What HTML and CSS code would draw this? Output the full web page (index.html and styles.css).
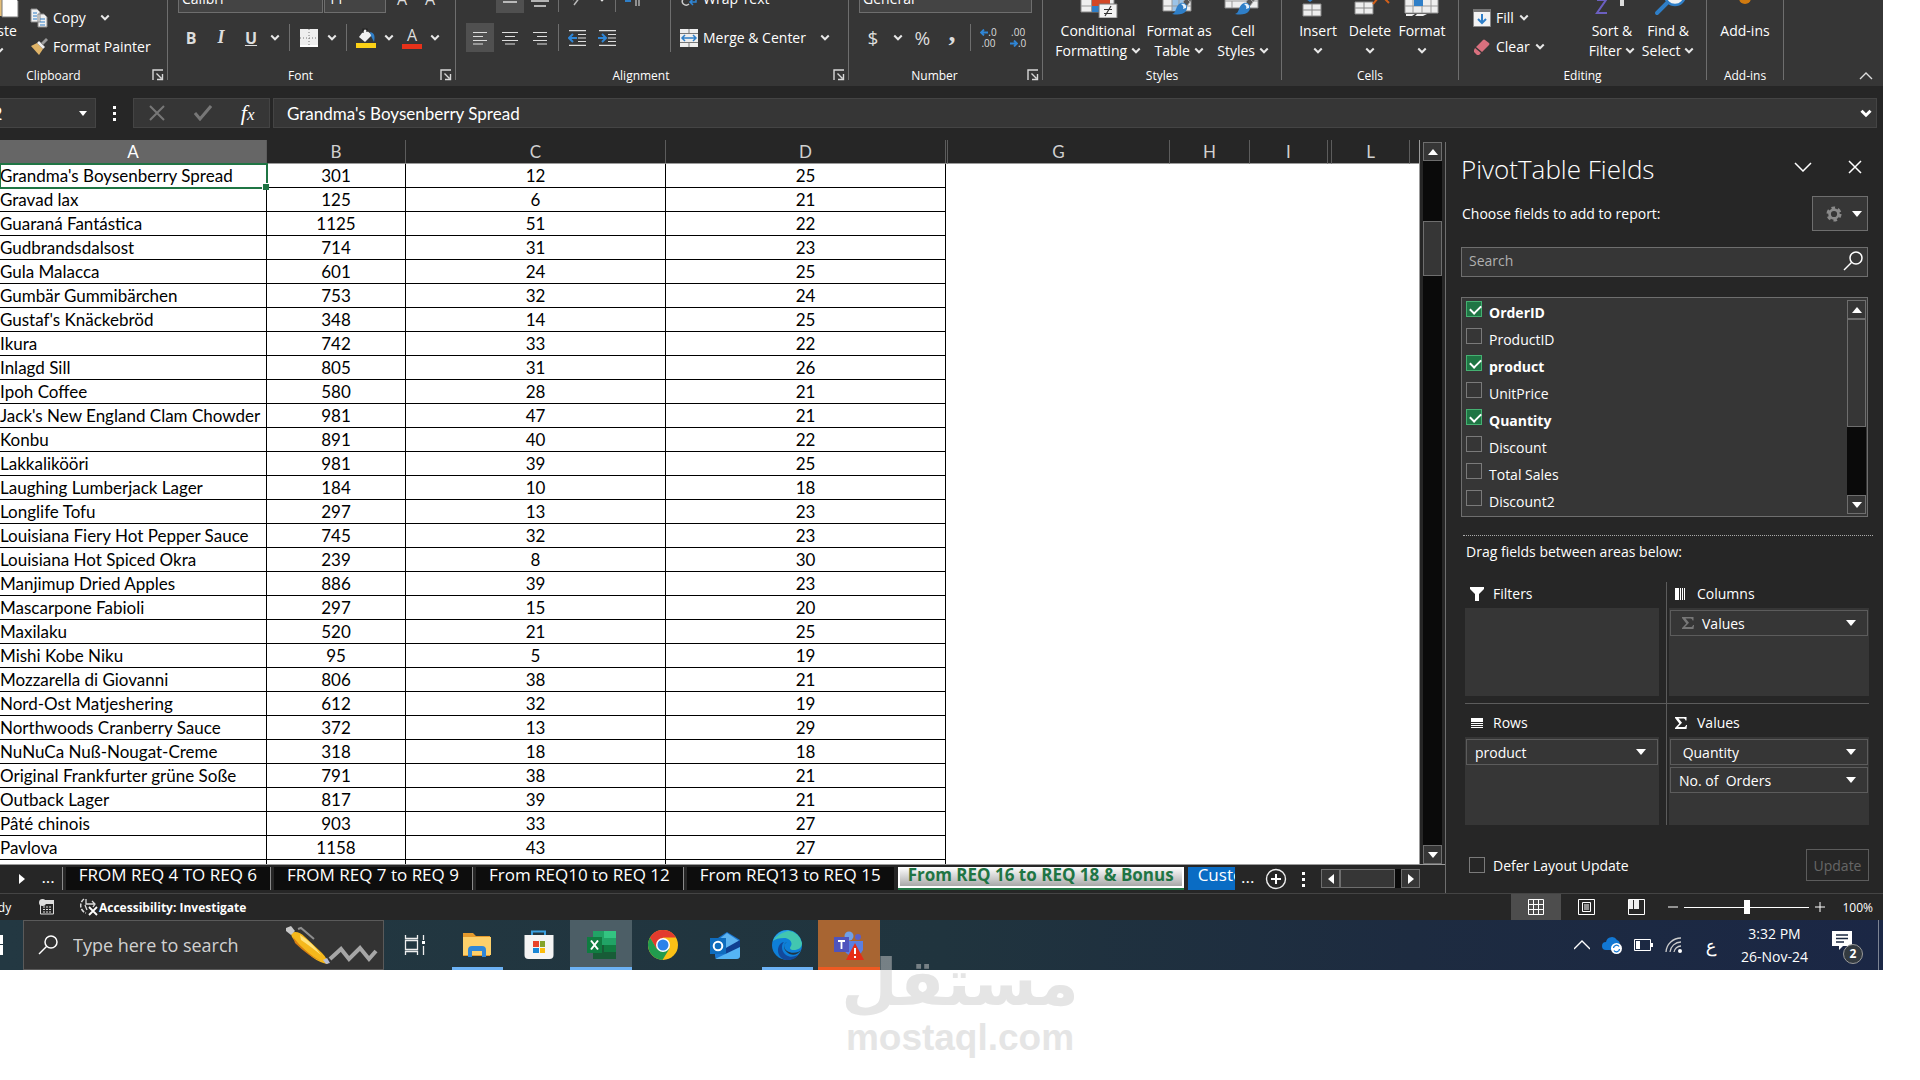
FILE: index.html
```html
<!DOCTYPE html>
<html lang="en">
<head>
    <meta charset="UTF-8">
    <meta name="viewport" content="width=device-width, initial-scale=1.0">
    <title>PivotTable Report</title>
    <link rel="stylesheet" href="styles.css">
</head>
<body>
    <!-- shared icons -->
    <svg class="sprite" aria-hidden="true">
        <symbol id="chev" viewBox="0 0 8 8"><path d="M1 2l3 3 3-3" fill="none" stroke="#e8e8e8" stroke-width="1.6"/></symbol>
        <symbol id="tri" viewBox="0 0 10 6"><path d="M0 0h10L5 6z" fill="#fff"/></symbol>
        <symbol id="launch" viewBox="0 0 12 12"><path d="M1 11V1h10M4.500 4.500l5 5M10.500 5v5.500H5" fill="none" stroke="#d8d8d8" stroke-width="1.400"/></symbol>
        <symbol id="glass" viewBox="0 0 20 20"><circle cx="13" cy="7" r="6" fill="none" stroke="#fff" stroke-width="1.500"/><path d="M8.500 11.500L1 19" stroke="#fff" stroke-width="1.500"/></symbol>
        <symbol id="sigma" viewBox="0 0 12 12"><path d="M0 0h11.500v3.500h-1C10.300 2 9.500 1.500 8 1.500H3.500L7 5.800 3 10h5.500c1.500 0 2.200-.6 2.500-2h1L11.500 12H0v-1l4.300-4.600L0 1z" fill="currentColor"/></symbol>
        <symbol id="brush" viewBox="0 0 28 22"><path d="M27-4l-9 10-4-3 10-9z" fill="#6e6e6e"/><path d="M18 6l-4-4-3 4 4 4z" fill="#555" stroke="#aaa" stroke-width=".8"/><path d="M0 18c5-1 3-9 9-11 5-1 8 4 5 8-3 4-9 4-14 3z" fill="#2f7fc8"/><path d="M9 8c3-1 6 1 5 4l-3 1c1-2 0-4-2-5z" fill="#e8f1fa"/></symbol>
    </svg>

    <div class="app">
        <div class="ribbon">
            <div class="group clipboard">
                <div class="body">
                    <button class="big paste">
                        <svg width="40" height="40" viewBox="0 0 40 40"><path d="M0 0h24v38H0z" fill="#e4bd76"/><path d="M23 17h10l6 6v16H23z" fill="#fff" stroke="#777"/></svg>
                        <span>Paste</span><span><svg class="chev"><use href="#chev"/></svg></span>
                    </button>
                    <div class="stack">
                        <button class="item">
                            <svg width="18" height="20" viewBox="0 0 18 20"><path d="M1 1h6l3 3v10H1zM8 6h6l3 3v10H8z" fill="#f0f0f0" stroke="#888"/><path d="M3 5h4M3 8h4M3 11h4M10 11h5M10 14h5M10 17h5" stroke="#2f7fc8"/></svg>
                            Copy <svg class="chev far"><use href="#chev"/></svg>
                        </button>
                        <button class="item">
                            <svg width="18" height="18" viewBox="0 0 18 18"><path d="M1 8l6-3 6 6-4 6z" fill="#e0b468"/><path d="M7 5l2-2 6 6-2 2z" fill="#eee"/><path d="M11 5l5-5 2 2-5 5z" fill="#9a9a9a"/></svg>
                            Format Painter
                        </button>
                    </div>
                </div>
                <div class="foot"><span>Clipboard</span><svg class="launch"><use href="#launch"/></svg></div>
            </div>

            <div class="group font">
                <div class="body rows">
                    <div class="row">
                        <select class="combo name" aria-label="Font"><option>Calibri</option></select>
                        <select class="combo size" aria-label="Font size"><option>11</option></select>
                        <button class="tool grow">A</button><button class="tool shrink">A</button>
                    </div>
                    <div class="row">
                        <button class="tool wide"><b>B</b></button>
                        <button class="tool wide"><i class="serif">I</i></button>
                        <button class="tool wide"><b><u>U</u></b></button>
                        <button class="drop"><svg class="chev"><use href="#chev"/></svg></button>
                        <span class="sep"></span>
                        <button class="tool"><svg width="18" height="18" viewBox="0 0 18 18"><path d="M0 0h18v18H0z" fill="#eee"/><path d="M0 9h18M9 0v18" stroke="#777" stroke-dasharray="1 2"/><path d="M0 17h18" stroke="#fff" stroke-width="2"/></svg></button>
                        <button class="drop"><svg class="chev"><use href="#chev"/></svg></button>
                        <span class="sep"></span>
                        <button class="tool"><svg width="20" height="20" viewBox="0 0 20 20"><path d="M9 1l7 6-7 7-6-5z" fill="#f2f2f2"/><path d="M7 5V1h4v3" fill="none" stroke="#222" stroke-width="1.200"/><path d="M14 4c5 1 5 5 4 10l-3-6z" fill="#2f7fc8"/><path d="M0 15h20v5H0z" fill="#fcd116"/></svg></button>
                        <button class="drop"><svg class="chev"><use href="#chev"/></svg></button>
                        <button class="tool color"><span>A</span></button>
                        <button class="drop"><svg class="chev"><use href="#chev"/></svg></button>
                    </div>
                </div>
                <div class="foot"><span>Font</span><svg class="launch"><use href="#launch"/></svg></div>
            </div>

            <div class="group align">
                <div class="body">
                    <div class="rows split">
                        <div class="row gap">
                            <button class="tool"></button>
                            <button class="tool on"><svg width="18" height="16" viewBox="0 0 18 16"><path d="M1 3h16M4 7h10M2 11h14" stroke="#ddd" stroke-width="1.300"/></svg></button>
                            <button class="tool"><svg width="18" height="16" viewBox="0 0 18 16"><path d="M4 5h10M0 10h18M3 15h12" stroke="#ddd" stroke-width="1.300"/></svg></button>
                            <span class="sep"></span>
                            <button class="tool"><svg width="14" height="16" viewBox="0 0 14 16"><path d="M3 9l5-5M4 14L13 2" stroke="#bbb" stroke-width="1.500"/></svg></button>
                            <button class="drop"><svg class="chev"><use href="#chev"/></svg></button>
                            <span class="sep"></span>
                            <button class="tool"><svg width="18" height="16" viewBox="0 0 18 16"><path d="M0 10h6" stroke="#2f7fc8" stroke-width="2"/><path d="M11 2v13M14 2v13" stroke="#ccc" stroke-width="1.200"/></svg></button>
                        </div>
                        <div class="row gap">
                            <button class="tool on"><svg width="16" height="14" viewBox="0 0 16 14"><path d="M1 1.500h14M1 5.500h10M1 9.500h14M1 13h10" stroke="#ddd" stroke-width="1.200"/></svg></button>
                            <button class="tool"><svg width="16" height="14" viewBox="0 0 16 14"><path d="M0 1.500h16M3 5.500h10M0 9.500h16M3 13h10" stroke="#ddd" stroke-width="1.200"/></svg></button>
                            <button class="tool"><svg width="16" height="14" viewBox="0 0 16 14"><path d="M1 1.500h14M5 5.500h10M1 9.500h14M5 13h10" stroke="#ddd" stroke-width="1.200"/></svg></button>
                            <span class="sep"></span>
                            <button class="tool"><svg width="18" height="16" viewBox="0 0 18 16"><path d="M1 .7h17M10 4.500h8M10 8h8M10 11.500h8M1 15.300h17" stroke="#ddd" stroke-width="1.200"/><path d="M9 8H2M5 4L1 8l4 4" fill="none" stroke="#2f86d6" stroke-width="2"/></svg></button>
                            <button class="tool"><svg width="18" height="16" viewBox="0 0 18 16"><path d="M1 .7h17M10 4.500h8M10 8h8M10 11.500h8M1 15.300h17" stroke="#ddd" stroke-width="1.200"/><path d="M0 8h7M4 4l4 4-4 4" fill="none" stroke="#2f86d6" stroke-width="2"/></svg></button>
                        </div>
                    </div>
                    <div class="rows">
                        <button class="item short"><svg width="18" height="18" viewBox="0 0 18 18"><path d="M9 9a4 3.500 0 1 0 0 5" fill="none" stroke="#ccc" stroke-width="1.500"/><path d="M16 6v6h-5M13 9l-3 3 3 3" fill="none" stroke="#2f86d6" stroke-width="1.500"/></svg>Wrap Text</button>
                        <button class="item short"><svg width="18" height="18" viewBox="0 0 18 18"><path d="M0 0h18v18H0z" fill="#eee"/><path d="M0 4.500h18M0 13.500h18M9 0v4M9 14v4" stroke="#777"/><path d="M2 9h14M5 6L2 9l3 3M13 6l3 3-3 3" fill="none" stroke="#2f7fc8" stroke-width="1.500"/></svg>Merge &amp; Center <svg class="chev far"><use href="#chev"/></svg></button>
                    </div>
                </div>
                <div class="foot"><span>Alignment</span><svg class="launch"><use href="#launch"/></svg></div>
            </div>

            <div class="group number">
                <div class="body rows">
                    <div class="row"><select class="combo format" aria-label="Number format"><option>General</option></select></div>
                    <div class="row gap">
                        <button class="tool sign">$</button>
                        <button class="drop"><svg class="chev"><use href="#chev"/></svg></button>
                        <button class="tool sign">%</button>
                        <button class="tool sign comma">,</button>
                        <span class="sep"></span>
                        <button class="tool dec"><span><svg width="8" height="7" viewBox="0 0 8 7"><path d="M8 3.500H2M4 .5l-3 3 3 3" fill="none" stroke="#2f86d6" stroke-width="1.800"/></svg>.0</span><span>.00</span></button>
                        <button class="tool dec"><span>.00</span><span><svg width="8" height="7" viewBox="0 0 8 7"><path d="M0 3.500h6M4 .5l3 3-3 3" fill="none" stroke="#2f86d6" stroke-width="1.800"/></svg>.0</span></button>
                    </div>
                </div>
                <div class="foot"><span>Number</span><svg class="launch"><use href="#launch"/></svg></div>
            </div>

            <div class="group">
                <div class="body bigs">
                    <button class="big w90">
                        <svg width="40" height="40" viewBox="0 0 40 40"><path d="M3 0h33v34H3z" fill="#eee" stroke="#888"/><path d="M14 22h18v6H14z" fill="#d24726"/><path d="M14 28h7v6h-7z" fill="#2f7fc8"/><path d="M3 28h11M13.500 20v14" stroke="#999"/><path d="M21 26h18v14H21z" fill="#f3f3f3" stroke="#777"/><path d="M26 31.500h8M26 35.500h8M33 28l-6 10" stroke="#333" stroke-width="1.200"/></svg>
                        <span>Conditional</span><span>Formatting <svg class="chev"><use href="#chev"/></svg></span>
                    </button>
                    <button class="big w72">
                        <svg width="40" height="40" viewBox="0 0 40 40"><path d="M4 0h28v33H4z" fill="#eee" stroke="#888"/><path d="M13 22h14v11H13z" fill="#9cc3e6"/><path d="M4 28h28M13 20v13M20 20v13" stroke="#999"/><use href="#brush" x="13" y="18" width="28" height="22"/></svg>
                        <span>Format as</span><span>Table <svg class="chev"><use href="#chev"/></svg></span>
                    </button>
                    <button class="big w56">
                        <svg width="40" height="40" viewBox="0 0 40 40"><path d="M2 0h33v30H2z" fill="#eee" stroke="#888"/><path d="M2 23h33M9 23v7" stroke="#999"/><use href="#brush" x="12" y="18" width="28" height="22"/></svg>
                        <span>Cell</span><span>Styles <svg class="chev"><use href="#chev"/></svg></span>
                    </button>
                </div>
                <div class="foot"><span>Styles</span></div>
            </div>

            <div class="group">
                <div class="body bigs">
                    <button class="big w52">
                        <svg width="40" height="40" viewBox="0 0 40 40"><path d="M8 21l4 3 4-3z" fill="#2f7fc8"/><path d="M5 26h18v12H5zM5 32h18M14 26v12" fill="#eee" stroke="#888"/></svg>
                        <span>Insert</span><span><svg class="chev"><use href="#chev"/></svg></span>
                    </button>
                    <button class="big w52">
                        <svg width="40" height="40" viewBox="0 0 40 40"><path d="M5 24h18v12H5zM5 30h18M14 24v12" fill="#eee" stroke="#888"/><path d="M23 26l5-6M34 20l5 5" stroke="#d2601a" stroke-width="2"/></svg>
                        <span>Delete</span><span><svg class="chev"><use href="#chev"/></svg></span>
                    </button>
                    <button class="big w52">
                        <svg width="40" height="40" viewBox="0 0 40 40"><path d="M3 8h33v27H3zM3 28h33M11 8v27M20 8v27M29 8v27" fill="#eee" stroke="#999"/><path d="M12 18h9v10h-9z" fill="#2f7fc8"/><path d="M4 36h9l-3 2H4zM15 36h10l-4 2h-8z" fill="#eee"/></svg>
                        <span>Format</span><span><svg class="chev"><use href="#chev"/></svg></span>
                    </button>
                </div>
                <div class="foot"><span>Cells</span></div>
            </div>

            <div class="group">
                <div class="body bigs">
                    <div class="stack edit">
                        <button class="item"><svg width="18" height="18" viewBox="0 0 18 18"><path d="M.5.5h17v17H.5z" fill="#f3f3f3" stroke="#888"/><path d="M0 0h18v3H0z" fill="#777"/><path d="M9 5v9M5 10l4 4 4-4" fill="none" stroke="#2f7fc8" stroke-width="2"/></svg>Fill <svg class="chev"><use href="#chev"/></svg></button>
                        <button class="item"><svg width="18" height="18" viewBox="0 0 18 18"><path d="M10 2q1-1 2 0l4 3q1 1 0 2l-7 7-6-5z" fill="#d9707e"/><path d="M2 10l6 5-2 2H4l-3-3v-2z" fill="#d9707e"/></svg>Clear <svg class="chev"><use href="#chev"/></svg></button>
                    </div>
                    <button class="big w56">
                        <svg width="40" height="40" viewBox="0 0 40 40"><path d="M5 22h9L5 35h10" fill="none" stroke="#6b5fc0" stroke-width="2"/><path d="M28 20h4v8h-4z" fill="#ddd"/></svg>
                        <span>Sort &amp;</span><span>Filter <svg class="chev"><use href="#chev"/></svg></span>
                    </button>
                    <button class="big w56">
                        <svg width="40" height="40" viewBox="0 0 40 40"><circle cx="27" cy="17" r="10" fill="#f3f3f3" stroke="#2f7fc8" stroke-width="2.500"/><path d="M19 25L9 35" stroke="#2f7fc8" stroke-width="4" stroke-linecap="round"/></svg>
                        <span>Find &amp;</span><span>Select <svg class="chev"><use href="#chev"/></svg></span>
                    </button>
                </div>
                <div class="foot"><span>Editing</span></div>
            </div>

            <div class="group">
                <div class="body bigs">
                    <button class="big w56">
                        <svg width="40" height="40" viewBox="0 0 40 40"><circle cx="20" cy="20" r="6" fill="#d07a10"/></svg>
                        <span>Add-ins</span><span></span>
                    </button>
                </div>
                <div class="foot"><span>Add-ins</span></div>
            </div>
            <button class="collapse" aria-label="Collapse ribbon"><svg width="14" height="8" viewBox="0 0 14 8"><path d="M1 7l6-6 6 6" fill="none" stroke="#ddd" stroke-width="1.400"/></svg></button>
        </div>

        <div class="formula-bar">
            <div class="name-box"><input type="text" value="A2" aria-label="Name box"><svg width="8" height="5"><use href="#tri"/></svg></div>
            <span class="dots"><i></i><i></i><i></i></span>
            <div class="fx">
                <button aria-label="Cancel"><svg width="16" height="16" viewBox="0 0 16 16"><path d="M1 1l14 14M15 1L1 15" stroke="#777" stroke-width="2"/></svg></button>
                <button aria-label="Enter"><svg width="18" height="16" viewBox="0 0 18 16"><path d="M1 8l5 6L17 1" fill="none" stroke="#777" stroke-width="3"/></svg></button>
                <button aria-label="Insert function"><i>f<small>x</small></i></button>
            </div>
            <div class="formula"><input type="text" value="Grandma's Boysenberry Spread" aria-label="Formula"><svg width="12" height="12" viewBox="0 0 8 8"><path d="M1 2.500l3 3 3-3" fill="none" stroke="#fff" stroke-width="2"/></svg></div>
        </div>

        <div class="work">
            <div class="book">
                <div class="sheet">
                    <div class="grid">
                        <table>
                            <colgroup><col class="ca"><col class="cb"><col class="cc"><col class="cd"><col class="hid"><col class="cg"><col class="ch"><col class="ci"><col class="hid2"><col class="ci"><col></colgroup>
                            <thead><tr><th class="sel">A</th><th>B</th><th>C</th><th>D</th><th></th><th>G</th><th>H</th><th>I</th><th></th><th>L</th><th></th></tr></thead>
                            <tbody id="rows"></tbody>
                        </table>
                    </div>
                    <div class="vbar">
                        <button class="sb" aria-label="Up"><svg class="up" width="10" height="6"><use href="#tri"/></svg></button>
                        <div class="track"><div class="thumb"></div></div>
                        <button class="sb" aria-label="Down"><svg width="10" height="6"><use href="#tri"/></svg></button>
                    </div>
                </div>
                <div class="tabs">
                    <button class="nav" aria-label="Next sheet"><svg width="6" height="10" viewBox="0 0 6 10"><path d="M0 0l6 5-6 5z" fill="#fff"/></svg></button>
                    <span class="more">...</span>
                    <button class="tab">FROM REQ 4 TO REQ 6</button>
                    <button class="tab">FROM REQ 7 to REQ 9</button>
                    <button class="tab">From REQ10 to REQ 12</button>
                    <button class="tab">From REQ13 to REQ 15</button>
                    <button class="tab active">From REQ 16 to REQ 18 &amp; Bonus</button>
                    <button class="tab blue">Custo</button>
                    <span class="more">...</span>
                    <button class="add" aria-label="New sheet"><svg width="22" height="22" viewBox="0 0 22 22"><circle cx="11" cy="11" r="9.500" fill="none" stroke="#eee" stroke-width="1.400"/><path d="M11 6v10M6 11h10" stroke="#fff" stroke-width="2"/></svg></button>
                    <span class="dots"><i></i><i></i><i></i></span>
                    <div class="hbar">
                        <button class="sb" aria-label="Left"><svg width="6" height="10" viewBox="0 0 6 10"><path d="M6 0L0 5l6 5z" fill="#fff"/></svg></button>
                        <div class="thumb"></div>
                        <button class="sb" aria-label="Right"><svg width="6" height="10" viewBox="0 0 6 10"><path d="M0 0l6 5-6 5z" fill="#fff"/></svg></button>
                    </div>
                </div>
            </div>

            <div class="panel">
                <div class="title">
                    <h2>PivotTable Fields</h2>
                    <button aria-label="Options"><svg width="18" height="10" viewBox="0 0 18 10"><path d="M1 1l8 8 8-8" fill="none" stroke="#fff" stroke-width="1.500"/></svg></button>
                    <button aria-label="Close"><svg width="14" height="14" viewBox="0 0 14 14"><path d="M1 1l12 12M13 1L1 13" stroke="#fff" stroke-width="1.500"/></svg></button>
                </div>
                <div class="choose">
                    <span>Choose fields to add to report:</span>
                    <button class="gear" aria-label="Tools"><svg width="16" height="16" viewBox="0 0 18 18"><circle cx="9" cy="9" r="5" fill="none" stroke="#8a8a8a" stroke-width="3"/><circle cx="9" cy="9" r="7" fill="none" stroke="#8a8a8a" stroke-width="3" stroke-dasharray="4 3.330"/></svg><svg width="10" height="6"><use href="#tri"/></svg></button>
                </div>
                <div class="search"><input type="text" placeholder="Search" aria-label="Search fields"><svg width="20" height="20"><use href="#glass"/></svg></div>
                <div class="fields">
                    <div class="list">
                        <label><input type="checkbox" checked><b>OrderID</b></label>
                        <label><input type="checkbox"><span>ProductID</span></label>
                        <label><input type="checkbox" checked><b>product</b></label>
                        <label><input type="checkbox"><span>UnitPrice</span></label>
                        <label><input type="checkbox" checked><b>Quantity</b></label>
                        <label><input type="checkbox"><span>Discount</span></label>
                        <label><input type="checkbox"><span>Total Sales</span></label>
                        <label><input type="checkbox"><span>Discount2</span></label>
                    </div>
                    <div class="vbar">
                        <button class="sb" aria-label="Up"><svg class="up" width="10" height="6"><use href="#tri"/></svg></button>
                        <div class="track"><div class="thumb"></div></div>
                        <button class="sb" aria-label="Down"><svg width="10" height="6"><use href="#tri"/></svg></button>
                    </div>
                </div>
                <div class="drag">Drag fields between areas below:</div>
                <div class="areas">
                    <div class="area left top">
                        <h3><svg width="14" height="14" viewBox="0 0 14 14"><path d="M0 0h14v2L9 7v7H5V7L0 2z" fill="#fff"/></svg>Filters</h3>
                        <div class="drop-zone"></div>
                    </div>
                    <div class="area top">
                        <h3><svg width="14" height="14" viewBox="0 0 14 14"><path d="M1 1h4v12H1zM6 1h1v12H6zM8 1h1v12H8zM10 1h1v12h-1z" fill="#fff"/></svg>Columns</h3>
                        <div class="drop-zone"><button class="field"><svg class="dim" width="12" height="12"><use href="#sigma"/></svg><span>Values</span><svg width="10" height="6"><use href="#tri"/></svg></button></div>
                    </div>
                    <div class="area left">
                        <h3><svg width="14" height="14" viewBox="0 0 14 14"><path d="M1 2h12v4H1zM1 7h12v1H1zM1 9h12v1H1zM1 11h12v1H1z" fill="#fff"/></svg>Rows</h3>
                        <div class="drop-zone"><button class="field"><span>product</span><svg width="10" height="6"><use href="#tri"/></svg></button></div>
                    </div>
                    <div class="area">
                        <h3><svg width="14" height="12"><use href="#sigma"/></svg>Values</h3>
                        <div class="drop-zone">
                            <button class="field"><span>&nbsp;Quantity</span><svg width="10" height="6"><use href="#tri"/></svg></button>
                            <button class="field"><span>No. of&nbsp; Orders</span><svg width="10" height="6"><use href="#tri"/></svg></button>
                        </div>
                    </div>
                </div>
                <div class="defer">
                    <label><input type="checkbox"><span>Defer Layout Update</span></label>
                    <button disabled>Update</button>
                </div>
            </div>
        </div>

        <div class="status">
            <span class="ready">Ready</span>
            <svg width="16" height="16" viewBox="0 0 16 16"><path d="M1.500 3v12h13V1.500H6" fill="none" stroke="#ddd"/><path d="M6 1h9v4H6z" fill="#ddd"/><circle cx="3.500" cy="3.500" r="3.500" fill="#ddd"/><path d="M4 8h2M7 8h2M10 8h2M4 10.500h2M7 10.500h2M10 10.500h2M4 13h2M7 13h2M10 13h2" stroke="#ddd"/></svg>
            <button class="access"><svg width="20" height="18" viewBox="0 0 20 18"><path d="M6 1a8 8 0 0 0 2 14" fill="none" stroke="#ddd" stroke-width="1.500" stroke-dasharray="4 1.500"/><path d="M8 1v5h8M14 3l3 3-2 3M7 7l2 5" fill="none" stroke="#ddd" stroke-width="1.300"/><path d="M11 9l8 8M19 9l-8 8" stroke="#fff" stroke-width="1.800"/></svg>Accessibility: Investigate</button>
            <div class="views">
                <button class="on" aria-label="Normal"><svg width="16" height="16" viewBox="0 0 16 16"><path d="M.5.5h15v15H.5zM.5 5.500h15M.5 10.500h15M5.500.5v15M10.500.5v15" fill="none" stroke="#fff"/></svg></button>
                <button aria-label="Page layout"><svg width="17" height="16" viewBox="0 0 17 16"><path d="M.5.5h16v15H.5zM4.500 3.500h8v9h-8zM6 6h5M6 8h5M6 10h5" fill="none" stroke="#fff"/></svg></button>
                <button aria-label="Page break"><svg width="17" height="16" viewBox="0 0 17 16"><path d="M.5.5h16v15H.5z" fill="none" stroke="#fff"/><path d="M1 1h4v9H1zM6 1h5v9H6z" fill="#eee"/></svg></button>
            </div>
            <button class="zoom" aria-label="Zoom out"><svg width="10" height="10" viewBox="0 0 10 10"><path d="M0 5h10" stroke="#fff"/></svg></button>
            <input type="range" min="0" max="100" value="50" aria-label="Zoom">
            <button class="zoom" aria-label="Zoom in"><svg width="10" height="10" viewBox="0 0 10 10"><path d="M0 5h10M5 0v10" stroke="#fff"/></svg></button>
            <span class="percent">100%</span>
        </div>

        <div class="taskbar">
            <button class="start" aria-label="Start"><svg width="20" height="20" viewBox="0 0 20 20"><path d="M0 0h9v9H0zM10 0h10v9H10zM0 10h9v10H0zM10 10h10v10H10z" fill="#fff"/></svg></button>
            <div class="find">
                <svg width="20" height="20"><use href="#glass"/></svg>
                <input type="text" placeholder="Type here to search" aria-label="Type here to search">
                <svg width="92" height="40" viewBox="0 0 92 40">
                    <path d="M44 34l11-10 8 10 11-11 9 11 7-8" fill="none" stroke="#a6a6a6" stroke-width="4"/>
                    <path d="M5 8Q12 5 19 12L36 28Q41 33 42 39 34 38 26 32L9 16Q5 12 5 8z" fill="#f5b81c"/>
                    <path d="M7 12q12 16 28 24-12-4-26-18z" fill="#d97f13"/>
                    <path d="M14 10q12 7 21 20-11-9-20-15z" fill="#ffe27a"/>
                    <path d="M0 3l5-2 4 5-4 4-5-4z" fill="#c8c8c8"/>
                    <path d="M12 4l3-1 13 11" fill="none" stroke="#8e8e8e" stroke-width="2"/>
                    <path d="M37 35l4-2 3 5-4 1z" fill="#b8bfd6"/>
                </svg>
            </div>
            <div class="apps">
                <button aria-label="Task view"><svg width="22" height="20" viewBox="0 0 22 20"><path d="M1.500 0v3.500h12V0M1.500 20v-3.500h12V20M1.500 5.500h12v9h-12zM19.500 0v5M19.500 11v9" fill="none" stroke="#eee" stroke-width="1.300"/><path d="M18 6h3v3h-3z" fill="#fff"/></svg></button>
                <button class="open" aria-label="File Explorer"><svg width="30" height="30" viewBox="0 0 30 30"><path d="M1 3h10l3 3h14v20H1z" fill="#e59a2c"/><path d="M1 7h28v18H1z" fill="#fdd06a"/><path d="M6 27v-7q0-4 4-4h10q4 0 4 4v7h-4v-6H10v6z" fill="#2f86d6"/></svg></button>
                <button aria-label="Store"><svg width="30" height="30" viewBox="0 0 30 30"><path d="M8 5V1.500h13V5" fill="none" stroke="#3aa0e0" stroke-width="2"/><path d="M.5 5h29v20q0 4-4 4h-21q-4 0-4-4z" fill="#f4f4f4"/><path d="M9 11h6v6H9z" fill="#e8432a"/><path d="M16 11h5v6h-5z" fill="#84a32a"/><path d="M9 18h6v5H9z" fill="#1a87d6"/><path d="M16 18h5v5h-5z" fill="#fbbc0c"/></svg></button>
                <button class="open full excel" aria-label="Excel"><svg width="30" height="30" viewBox="0 0 30 30"><path d="M7 1h23v28H7z" fill="#21a366"/><path d="M18 1h12v7H18z" fill="#33c481"/><path d="M7 15h23v14H7z" fill="#185c37"/><path d="M18 15h12v7H18z" fill="#107c41"/><path d="M1 7h15v16H1z" fill="#107c41"/><path d="M5 10.500l7 9M12 10.500l-7 9" stroke="#fff" stroke-width="2"/></svg></button>
                <button aria-label="Chrome"><svg width="30" height="30" viewBox="0 0 30 30"><circle cx="15" cy="15" r="15" fill="#fbc116"/><path d="M2 7.500A15 15 0 0 1 28 7.500H15L8.500 19z" fill="#e33b2e"/><path d="M2 7.500A15 15 0 0 0 14.500 30L21.500 18.500H8.500z" fill="#229b4e"/><circle cx="15" cy="15" r="7" fill="#fff"/><circle cx="15" cy="15" r="5.500" fill="#2a82ea"/></svg></button>
                <button aria-label="Outlook"><svg width="30" height="30" viewBox="0 0 30 30"><path d="M17 2l13 8v15q0 4-4 4H8q-3 0-3-3V10z" fill="#1b76d1"/><path d="M8 10l9-7 12 8-12 8z" fill="#5db3f0"/><path d="M14 19l16-9v8l-14 8z" fill="#0f3f91"/><path d="M5 29l25-12v9q0 3-4 3z" fill="#55b4f4"/><path d="M0 8h16v16H0z" fill="#0f6cbd"/><circle cx="8" cy="16" r="4.300" fill="none" stroke="#fff" stroke-width="2"/></svg></button>
                <button class="open" aria-label="Edge"><svg width="30" height="30" viewBox="0 0 30 30"><circle cx="15" cy="15" r="15" fill="#0e7fd8"/><path d="M1 11A15 15 0 0 1 30 13c0 5-4 7-8 7s-5-2-3-4c2-4-2-8-7-8S3 9 1 11z" fill="#42c6b0"/><path d="M1 11A15 15 0 0 1 18 .4C10 2 4 6 1 11z" fill="#2aa4e6"/><path d="M12 12c-3 3-3 9 2 13 4 3 9 2 13-1-5 8-16 8-20 1-3-6 1-13 5-13z" fill="#124a9c"/><path d="M15 12c-4 1-4 8 2 10s10 0 12-2c-3 5-9 6-13 3s-6-8-1-11z" fill="#22343f"/></svg></button>
                <button class="open full teams" aria-label="Teams"><svg width="32" height="30" viewBox="0 0 32 30"><circle cx="16" cy="6" r="4.500" fill="#6fa0e8"/><circle cx="25" cy="7" r="3" fill="#5b5fc7"/><path d="M8 11h22v9q-3 6-9 6-7 0-10-6z" fill="#5b7fe0"/><path d="M1 7h15v15H1z" fill="#4f54bd"/><path d="M5 11h7M8.500 11v8" stroke="#fff" stroke-width="1.800"/><path d="M22 13l9 17H13z" fill="#e62d17"/><path d="M22 18v6M22 26v2" stroke="#fff" stroke-width="2"/></svg></button>
            </div>
            <div class="tray">
                <svg width="16" height="10" viewBox="0 0 16 10"><path d="M0 9l8-8 8 8" fill="none" stroke="#fff" stroke-width="1.300"/></svg>
                <svg width="20" height="18" viewBox="0 0 20 18"><path d="M4 14a4 4 0 0 1 0-8 6 6 0 0 1 11-2q3 1 3 5v5z" fill="#1278d4"/><circle cx="14.500" cy="12.500" r="5.500" fill="#fff"/><path d="M11.500 12a3 3 0 0 1 5.500-1.500M17.500 13a3 3 0 0 1-5.500 1.500" fill="none" stroke="#1278d4" stroke-width="1.300"/></svg>
                <svg width="19" height="12" viewBox="0 0 19 12"><path d="M.5.5h16v11H.5z" fill="none" stroke="#fff"/><path d="M2 2h4v8H2zM17 4h2v4h-2z" fill="#fff"/></svg>
                <svg width="18" height="18" viewBox="0 0 18 18"><path d="M1 16A15 15 0 0 1 16 2M5 16A11 11 0 0 1 16 6M9 16a7 7 0 0 1 7-6" fill="none" stroke="#ccc" stroke-width="1.300"/><circle cx="15" cy="15" r="2" fill="#fff"/></svg>
                <span class="lang">ع</span>
                <div class="clock"><span>3:32 PM</span><span>26-Nov-24</span></div>
                <button class="note" aria-label="Notifications"><svg width="32" height="32" viewBox="0 0 32 32"><path d="M1 2h20v15h-9l-4 4v-4H1z" fill="#fff"/><path d="M5 6h12M5 9.500h12M5 13h8" stroke="#1c2a42" stroke-width="1.300"/></svg><em>2</em></button>
            </div>
        </div>
    </div>

    <div class="watermark"><span lang="ar">مستقل</span><span class="site">mostaql.com</span></div>

    <script>
        var data = [
            ["Grandma's Boysenberry Spread", 301, 12, 25],
            ["Gravad lax", 125, 6, 21],
            ["Guaraná Fantástica", 1125, 51, 22],
            ["Gudbrandsdalsost", 714, 31, 23],
            ["Gula Malacca", 601, 24, 25],
            ["Gumbär Gummibärchen", 753, 32, 24],
            ["Gustaf's Knäckebröd", 348, 14, 25],
            ["Ikura", 742, 33, 22],
            ["Inlagd Sill", 805, 31, 26],
            ["Ipoh Coffee", 580, 28, 21],
            ["Jack's New England Clam Chowder", 981, 47, 21],
            ["Konbu", 891, 40, 22],
            ["Lakkalikööri", 981, 39, 25],
            ["Laughing Lumberjack Lager", 184, 10, 18],
            ["Longlife Tofu", 297, 13, 23],
            ["Louisiana Fiery Hot Pepper Sauce", 745, 32, 23],
            ["Louisiana Hot Spiced Okra", 239, 8, 30],
            ["Manjimup Dried Apples", 886, 39, 23],
            ["Mascarpone Fabioli", 297, 15, 20],
            ["Maxilaku", 520, 21, 25],
            ["Mishi Kobe Niku", 95, 5, 19],
            ["Mozzarella di Giovanni", 806, 38, 21],
            ["Nord-Ost Matjeshering", 612, 32, 19],
            ["Northwoods Cranberry Sauce", 372, 13, 29],
            ["NuNuCa Nuß-Nougat-Creme", 318, 18, 18],
            ["Original Frankfurter grüne Soße", 791, 38, 21],
            ["Outback Lager", 817, 39, 21],
            ["Pâté chinois", 903, 33, 27],
            ["Pavlova", 1158, 43, 27]
        ];

        var html = "";
        for (var i = 0; i < data.length; i++) {
            html += i === 0 ? "<tr class='current'>" : "<tr>";
            for (var j = 0; j < 4; j++) {
                html += "<td>" + data[i][j] + "</td>";
            }
            html += "</tr>";
        }
        // top edge of the next row
        html += "<tr class='cut'><td></td><td></td><td></td><td></td></tr>";
        document.getElementById("rows").innerHTML = html;
    </script>
</body>
</html>
```

FILE: styles.css
```css
* {
    box-sizing: border-box;
}

body {
    margin: 0;
    background: #fff;
    color: #fff;
    font-family: "Open Sans", "Noto Sans", sans-serif;
    font-size: 14px;
    overflow-x: hidden;
}

button, input, select {
    font: inherit;
    color: inherit;
    background: none;
    border: 0;
    padding: 0;
    margin: 0;
    outline: none;
}

svg {
    display: block;
    flex: none;
}

.sprite {
    display: none;
}

.app {
    margin-right: 37px;
    background: #262626;
    overflow: hidden;
}

/* ribbon */
.ribbon {
    display: flex;
    background: #363636;
    height: 86px;
    padding-bottom: 6px;
    margin-left: -38px;
    overflow: hidden;
}

.group {
    display: flex;
    flex-direction: column;
    border-right: 1px solid #6e6e6e;
}

.clipboard { width: 206px; }
.font { width: 288px; }
.align { width: 393px; }
.number { width: 194px; }

.body {
    flex: none;
    display: flex;
    align-items: flex-end;
    height: 65px;
    padding: 0 10px 4px;
    overflow: hidden;
}

.clipboard .body {
    padding-left: 17px;
}

.foot {
    display: flex;
    height: 15px;
    line-height: 21px;
    font-size: 12px;
    text-align: center;
}

.foot span {
    flex: 1;
}

.launch {
    width: 12px;
    height: 12px;
    margin: 4px 3px 0 7px;
}

.chev {
    width: 10px;
    height: 10px;
    display: inline-block;
}

.chev.far {
    margin-left: 9px;
}

.big {
    display: flex;
    flex-direction: column;
    align-items: center;
    line-height: 20px;
    white-space: nowrap;
}

.big > svg {
    margin-bottom: 3px;
}

.big span {
    height: 20px;
}

.paste { width: 40px; }
.w90 { width: 90px; }
.w72 { width: 72px; }
.w56 { width: 56px; }
.w52 { width: 52px; }

.stack {
    display: flex;
    flex-direction: column;
    padding-left: 11px;
}

.stack.edit {
    width: 115px;
    padding-left: 4px;
}

.item {
    display: flex;
    align-items: center;
    gap: 5px;
    height: 29px;
    white-space: nowrap;
}

.rows {
    display: flex;
    flex-direction: column;
    justify-content: flex-end;
    align-items: stretch;
    gap: 10px;
}

.body.rows {
    padding: 0 8px 13px;
}

.number .body.rows {
    padding: 0 10px 13px;
}

.align .body {
    padding-bottom: 13px;
}

.split {
    width: 205px;
    border-right: 1px solid #6e6e6e;
    margin-right: 9px;
}

.row {
    display: flex;
    align-items: center;
    height: 29px;
    flex: none;
}

.row.gap {
    gap: 2px;
}

.tool {
    display: flex;
    align-items: center;
    justify-content: center;
    width: 28px;
    height: 29px;
    font-size: 16px;
    color: #ddd;
}

.tool.wide {
    width: 30px;
}

.tool.on {
    background: #505050;
}

.drop {
    display: flex;
    align-items: center;
    justify-content: center;
    width: 18px;
    height: 29px;
}

.sep {
    width: 1px;
    height: 27px;
    margin: 0 5px;
    background: #6e6e6e;
}

.gap .sep {
    margin: 0 2px;
}

.serif {
    font-family: "Liberation Serif", serif;
    font-weight: bold;
    font-size: 18px;
}

.color span {
    width: 20px;
    height: 22px;
    line-height: 16px;
    border-bottom: 5px solid #e8321a;
}

.sign {
    font-size: 19px;
}

.comma {
    padding-bottom: 12px;
    font: bold 28px "Liberation Serif", serif;
}

.dec {
    flex-direction: column;
    font-size: 10px;
    line-height: 11px;
}

.dec span {
    display: flex;
    align-items: center;
}

.combo {
    appearance: none;
    height: 29px;
    padding: 0 3px;
    background: #444;
    border: 1px solid #6e6e6e;
}

.combo.name { width: 145px; margin: 0 1px 0 2px; }
.combo.size { width: 62px; margin-right: 2px; }
.combo.format { width: 174px; }

.collapse {
    margin: auto 10px 0 auto;
    height: 8px;
}

/* formula bar */
.formula-bar {
    display: flex;
    align-items: center;
    padding: 12px 6px 12px 0;
    font: 17px Lato, sans-serif;
}

.formula-bar > div {
    display: flex;
    align-items: center;
    height: 30px;
    background: #363636;
    border: 1px solid #444;
}

.formula-bar .name-box {
    width: 120px;
    margin-left: -24px;
    padding: 0 8px 0 4px;
}

.name-box input {
    flex: 1;
    min-width: 0;
}

.dots {
    display: flex;
    flex-direction: column;
    align-items: center;
    gap: 3px;
    width: 37px;
}

.dots i {
    width: 3px;
    height: 3px;
    background: #fff;
}

.formula-bar .fx {
    width: 137px;
    margin-right: 3px;
    justify-content: space-around;
}

.fx i {
    font: italic 22px "Liberation Serif", serif;
}

.fx small {
    font-size: 17px;
}

.formula-bar .formula {
    flex: 1;
    padding: 0 4px 0 13px;
}

.formula input {
    flex: 1;
}

/* sheet */
.work {
    display: flex;
}

.book {
    flex: 1;
    min-width: 0;
}

.sheet {
    display: flex;
}

.grid {
    flex: 1;
    overflow: hidden;
    background: #fff;
    border-right: 1px solid #9b9b9b;
}

table {
    width: 100%;
    table-layout: fixed;
    border-collapse: separate;
    border-spacing: 0;
    color: #000;
    font: 17px/20px Lato, sans-serif;
}

.ca { width: 267px; }
.cb { width: 139px; }
.cc { width: 260px; }
.cd { width: 280px; }
.cg { width: 222px; }
.ch { width: 80px; }
.ci { width: 78px; }
.hid { width: 2px; }
.hid2 { width: 4px; }

th {
    height: 24px;
    padding: 0;
    background: #262626;
    color: #d0d0d0;
    font-weight: normal;
    border-right: 1px solid #5c5c5c;
    border-bottom: 1px solid #9b9b9b;
}

th:last-child {
    border-right: 0;
}

th.sel {
    background: #666;
    color: #fff;
    border-bottom-color: #1f7544;
}

td {
    height: 24px;
    padding: 1px 0 0;
    text-align: center;
    white-space: nowrap;
    border-right: 1px solid #000;
    border-bottom: 1px solid #000;
}

td:first-child {
    text-align: left;
}

.current td:first-child {
    position: relative;
    outline: 2px solid #1f7544;
    outline-offset: -1px;
}

/* fill handle */
.current td:first-child::after {
    content: "";
    position: absolute;
    right: -3px;
    bottom: -3px;
    width: 6px;
    height: 6px;
    background: #1f7544;
    border: solid #fff;
    border-width: 1px 0 0 1px;
}

.cut td {
    height: 4px;
    line-height: 0;
    border-bottom: 0;
}

.vbar {
    display: flex;
    flex-direction: column;
    width: 19px;
    margin: 2px 3px 0;
    background: #0a0a0a;
}

.sb {
    display: flex;
    align-items: center;
    justify-content: center;
    width: 19px;
    height: 19px;
    flex: none;
    background: #363636;
    border: 1px solid #6e6e6e;
}

.up {
    transform: rotate(180deg);
}

.track {
    flex: 1;
}

.thumb {
    background: #363636;
    border: 1px solid #6e6e6e;
}

.sheet .thumb {
    height: 55px;
    margin-top: 60px;
}

/* sheet tabs */
.tabs {
    display: flex;
    height: 29px;
    border-top: 1px solid #9b9b9b;
    padding: 2px 25px 0 19px;
    align-items: flex-start;
    font-size: 17px;
}

.nav {
    width: 8px;
    height: 23px;
}

.more {
    width: 40px;
    padding-left: 6px;
    text-align: center;
    line-height: 20px;
}

.tab {
    flex: none;
    height: 23px;
    padding: 0 13px 7px;
    line-height: 16px;
    white-space: nowrap;
    background: #0d0d0d;
    margin: 0 2px;
    box-shadow: -3px 0 0 #262626, -4px 0 0 #8a8a8a;
}

.tab.active {
    padding: 0 8px 3px;
    color: #1f7544;
    font-weight: bold;
    border: 2px solid #fff;
    border-top: 0;
    background: linear-gradient(#fff, #a8a8a8);
    box-shadow: 0 2px 0 #1f7544;
    height: 21px;
}

.tab.blue {
    width: 47px;
    padding: 0 0 7px 10px;
    text-align: left;
    overflow: hidden;
    background: #0a6cc4;
    box-shadow: none;
}

.blue + .more {
    width: 24px;
    padding: 0;
}

.add {
    margin: 1px 0 0 6px;
}

.tabs .dots {
    margin-top: 5px;
}

.hbar {
    display: flex;
    margin: 2px 0 0 auto;
    background: #0a0a0a;
}

.hbar .thumb {
    width: 55px;
    margin-right: 6px;
}

/* field list */
.panel {
    width: 438px;
    margin-top: 2px;
    padding: 10px 14px 0 15px;
    border-left: 1px solid #6e6e6e;
}

.title {
    display: flex;
    align-items: center;
    height: 34px;
    margin-right: 7px;
    gap: 36px;
}

.title button {
    padding-bottom: 4px;
}

h2 {
    flex: 1;
    margin: 0;
    font-size: 26px;
    font-weight: 300;
}

.choose {
    display: flex;
    justify-content: space-between;
    align-items: center;
    margin: 10px 1px 16px;
}

.gear {
    display: flex;
    align-items: center;
    justify-content: space-between;
    width: 56px;
    height: 35px;
    padding: 0 5px 0 13px;
    background: #363636;
    border: 1px solid #6e6e6e;
}

.search {
    display: flex;
    align-items: center;
    height: 30px;
    margin-right: 1px;
    padding: 0 4px 2px 7px;
    background: #363636;
    border: 1px solid #6e6e6e;
}

.search input {
    flex: 1;
    padding-bottom: 2px;
}

.search input::placeholder {
    color: #b0b0b0;
}

.fields {
    display: flex;
    margin: 20px 1px 18px 0;
    height: 220px;
    background: #363636;
    border: 1px solid #6e6e6e;
}

.list {
    flex: 1;
    padding: 3px 4px;
}

.list label {
    display: flex;
    gap: 7px;
    height: 27px;
}

.list b, .list span {
    line-height: 23px;
}

input[type="checkbox"] {
    appearance: none;
    flex: none;
    width: 16px;
    height: 16px;
    border: 1px solid #7a7a7a;
}

input[type="checkbox"]:checked {
    background: #1f7544;
    border-color: #45b172;
}

input[type="checkbox"]:checked::after {
    content: "";
    display: block;
    width: 9px;
    height: 5px;
    margin: 3px 0 0 3px;
    border: solid #fff;
    border-width: 0 0 2px 2px;
    transform: rotate(-45deg);
}

.fields .vbar {
    margin: 2px 1px 2px;
}

.fields .thumb {
    height: 108px;
}

.drag {
    margin: 0 -4px 0 2px;
    padding: 6px 3px 0;
    height: 47px;
    border-top: 1px dotted #aaa;
}

.areas {
    display: grid;
    grid-template-columns: 202px 1fr;
    margin-left: 4px;
}

.area {
    padding-left: 2px;
    padding-top: 7px;
}

.area.left {
    padding: 7px 7px 0 0;
    border-right: 1px solid #5c5c5c;
}

.area.top {
    padding-top: 0;
    padding-bottom: 7px;
    border-bottom: 1px solid #5c5c5c;
}

h3 {
    display: flex;
    align-items: center;
    gap: 9px;
    height: 26px;
    margin: 0;
    padding: 0 5px 3px;
    font-size: 14px;
    font-weight: normal;
}

.drop-zone {
    height: 88px;
    padding: 2px 1px;
    background: #363636;
}

.field {
    display: flex;
    align-items: center;
    width: 100%;
    height: 26px;
    margin-bottom: 2px;
    padding: 0 11px 0 8px;
    gap: 8px;
    border: 1px solid #5c5c5c;
}

.field span {
    flex: 1;
    text-align: left;
}

.dim {
    color: #777;
    margin-left: 3px;
}

.defer {
    display: flex;
    justify-content: space-between;
    align-items: center;
    margin: 24px 0 0 8px;
}

.defer label {
    display: flex;
    align-items: center;
    gap: 8px;
}

.defer button {
    width: 63px;
    height: 32px;
    color: #666;
    border: 1px solid #5c5c5c;
}

/* status bar */
.status {
    display: flex;
    align-items: center;
    height: 27px;
    border-top: 1px solid #444;
    font-size: 12px;
}

.ready {
    width: 62px;
    margin-left: -23px;
}

.access {
    display: flex;
    align-items: center;
    gap: 1px;
    margin-left: 23px;
    font-weight: bold;
}

.views {
    display: flex;
    align-self: stretch;
    margin-left: auto;
    margin-right: 7px;
}

.views button {
    display: flex;
    align-items: center;
    justify-content: center;
    width: 50px;
}

.views .on {
    background: #4d4d4d;
}

.status input {
    appearance: none;
    width: 125px;
    height: 14px;
    margin: 0 6px;
    background: linear-gradient(#fff, #fff) center / 100% 1px no-repeat;
}

.status input::-webkit-slider-thumb {
    appearance: none;
    width: 6px;
    height: 14px;
    background: #fff;
}

.percent {
    margin: 0 10px 0 17px;
}

/* taskbar */
.taskbar {
    display: flex;
    height: 50px;
    background: linear-gradient(90deg, #233842, #20343e 50%, #1d2b40 75%, #1b2745);
}

.start {
    width: 40px;
    margin-left: -17px;
}

.find {
    display: flex;
    align-items: center;
    width: 361px;
    padding: 0 5px 0 14px;
    background: #333;
    border: 1px solid #5a5a5a;
}

.find input {
    flex: 1;
    min-width: 0;
    padding-left: 15px;
    font-size: 18px;
}

.find input::placeholder {
    color: #d0d0d0;
}

.apps {
    display: flex;
}

.apps button {
    display: flex;
    align-items: center;
    justify-content: center;
    width: 62px;
}

.apps .open {
    background: linear-gradient(#6cb2f5, #6cb2f5) center bottom / 51px 3px no-repeat;
}

.apps .full {
    background-size: 100% 3px;
}

.apps .excel {
    background-color: #4c5e66;
}

.apps .teams {
    background-image: linear-gradient(#ee5a22, #ee5a22);
    background-color: #a86532;
}

.tray {
    display: flex;
    align-items: center;
    margin-left: auto;
    padding-right: 15px;
    gap: 12px;
    border-right: 1px solid #7d8494;
    margin-right: 4px;
}

.lang {
    width: 32px;
    margin-right: 2px;
    text-align: center;
    font: 18px "DejaVu Sans", sans-serif;
}

.clock {
    display: flex;
    flex-direction: column;
    align-items: center;
    line-height: 23px;
}

.note {
    position: relative;
    width: 32px;
    height: 32px;
    margin-left: 11px;
}

.note em {
    position: absolute;
    right: 0;
    bottom: -3px;
    width: 20px;
    height: 20px;
    border: 1px solid #999;
    border-radius: 50%;
    background: #333a40;
    font: bold 12px/18px "Open Sans", sans-serif;
    text-align: center;
}

/* watermark over the lower edge */
.watermark {
    position: absolute;
    top: 944px;
    left: 50%;
    transform: translateX(-50%);
    display: flex;
    flex-direction: column;
    align-items: center;
    color: #ccc;
    opacity: 0.5;
    font: bold 65px/77px "DejaVu Sans", sans-serif;
}

.watermark .site {
    font: bold 37px/34px "Liberation Sans", sans-serif;
}
```
